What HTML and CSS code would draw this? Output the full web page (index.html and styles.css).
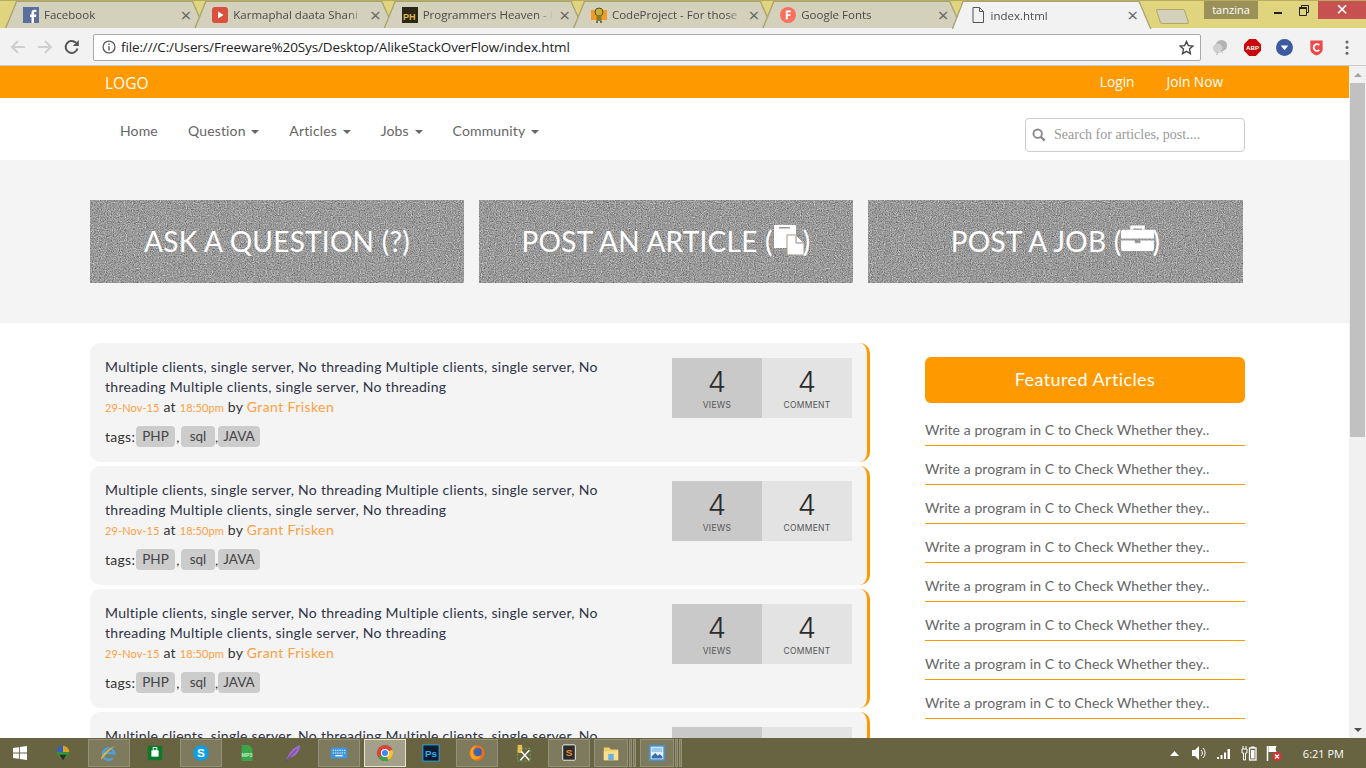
FILE: index.html
```html
<!DOCTYPE html>
<html lang="en">
<head>
<meta charset="utf-8">
<title>index.html</title>
<link rel="stylesheet" href="styles.css">
</head>
<body>
<svg class="defs" width="0" height="0" aria-hidden="true">
  <defs>
    <filter id="grain" x="0" y="0" width="100%" height="100%" color-interpolation-filters="sRGB">
      <feTurbulence type="fractalNoise" baseFrequency="0.85" numOctaves="2" seed="7" stitchTiles="noStitch"/>
      <feColorMatrix type="matrix" values="0.42 0.42 0 0 0.18  0.42 0.42 0 0 0.18  0.42 0.42 0 0 0.18  0 0 0 0 1"/>
    </filter>
  </defs>
</svg>
<div class="screen">
  <div class="tabstrip">
    <div class="tab">
      <svg class="favicon" viewBox="0 0 16 16"><rect width="16" height="16" fill="#5a6f9e"/><path d="M11 16V10h2l.4-2.4H11V6.200c0-.8.3-1.200 1.200-1.200h1.200V2.900c-.5-.1-1.200-.2-1.900-.2-1.900 0-3 1.100-3 3.200v1.700H7V10h1.500v6z" fill="#fff"/></svg>
      <span class="tab-title">Facebook</span><span class="tab-close">×</span>
    </div>
    <div class="tab">
      <svg class="favicon" viewBox="0 0 16 16"><rect width="16" height="16" rx="3" fill="#d9503f"/><path d="M6 4.500v7l5.500-3.500z" fill="#fff"/></svg>
      <span class="tab-title">Karmaphal daata Shani - </span><span class="tab-close">×</span>
    </div>
    <div class="tab">
      <svg class="favicon" viewBox="0 0 16 16"><rect width="16" height="16" fill="#2b2716"/><text x="1" y="12.500" class="ph-text">PH</text></svg>
      <span class="tab-title">Programmers Heaven - F</span><span class="tab-close">×</span>
    </div>
    <div class="tab">
      <svg class="favicon" viewBox="0 0 16 16"><rect x="0" y="3" width="16" height="10" fill="#f09a28"/><circle cx="8" cy="5" r="4" fill="#c8b03c" stroke="#5c4d1c"/><rect x="5.500" y="8" width="5" height="6" fill="#8a7a2a"/><path d="M5 15h2M9 15h2" stroke="#5c4d1c" stroke-width="1.500"/></svg>
      <span class="tab-title">CodeProject - For those </span><span class="tab-close">×</span>
    </div>
    <div class="tab">
      <svg class="favicon" viewBox="0 0 16 16"><circle cx="8" cy="8" r="8" fill="#f9705f"/><path d="M5.800 12.500v-9h5v1.700H7.800v2h2.600v1.700H7.800v3.600z" fill="#fff"/></svg>
      <span class="tab-title">Google Fonts</span><span class="tab-close">×</span>
    </div>
    <div class="tab tab-active">
      <svg class="favicon" viewBox="0 0 16 16"><path d="M3 .500h6.500L13.500 4.500v11H3zM9.500.500v4h4" fill="none" stroke="#555" stroke-width="1"/></svg>
      <span class="tab-title">index.html</span><span class="tab-close">×</span>
    </div>
    <div class="newtab"></div>
    <div class="window-controls">
      <span class="profile">tanzina</span>
      <span class="win-min"></span>
      <svg class="win-restore" viewBox="0 0 10 11"><path d="M2.500 2.500V.5h7v7H7.500M.5 2.500h7v8h-7z" fill="none" stroke="#222" stroke-width="1"/><rect x=".5" y="2.500" width="7" height="1.500" fill="#222"/></svg>
      <span class="win-close">×</span>
    </div>
  </div>

  <div class="toolbar">
    <svg class="tool" viewBox="0 0 16 16"><path d="M15 8H2M8 2 2 8l6 6" fill="none" stroke="#cfcfcf" stroke-width="2"/></svg>
    <svg class="tool" viewBox="0 0 16 16"><path d="M1 8h13M8 2l6 6-6 6" fill="none" stroke="#cfcfcf" stroke-width="2"/></svg>
    <svg class="tool" viewBox="0 0 16 16"><path d="M13.500 9.500A6 6 0 1 1 12 3.800" fill="none" stroke="#555" stroke-width="2"/><path d="M14.800 1v6h-6z" fill="#555"/></svg>
    <div class="address">
      <svg class="info" viewBox="0 0 16 16"><circle cx="8" cy="8" r="6.800" fill="none" stroke="#5a5a5a" stroke-width="1.500"/><rect x="7.200" y="7" width="1.600" height="5" fill="#5a5a5a"/><rect x="7.200" y="4" width="1.600" height="1.700" fill="#5a5a5a"/></svg>
      <span class="url">file:///C:/Users/Freeware%20Sys/Desktop/AlikeStackOverFlow/index.html</span>
      <svg class="star" viewBox="0 0 16 16"><path d="M8 1.500l2 4.500 4.800.5-3.600 3.200 1 4.800L8 12.100l-4.200 2.400 1-4.800L1.200 6.500 6 6z" fill="none" stroke="#444" stroke-width="1.400"/></svg>
    </div>
    <div class="extensions">
      <svg class="ext" viewBox="0 0 18 18"><circle cx="10" cy="7" r="6" fill="#b4b4b4"/><circle cx="6" cy="10" r="5" fill="#d0d0d0"/><path d="M6 14l-1 3M10 12l1 3" stroke="#aaa"/></svg>
      <svg class="ext" viewBox="0 0 18 18"><path d="M5.500 0h7L18 5.500v7L12.500 18h-7L0 12.500v-7z" fill="#c80a0a"/><text x="9" y="11.500" class="abp-text">ABP</text></svg>
      <svg class="ext" viewBox="0 0 18 18"><circle cx="9" cy="9" r="9" fill="#3b5aa0"/><path d="M5 7h8l-4 5z" fill="#fff"/></svg>
      <svg class="ext" viewBox="0 0 18 18"><path d="M2.500 1.500h13V11c0 3-3 5-6.500 6.500C5.500 16 2.500 14 2.500 11z" fill="#f04848"/><path d="M12 6.500A3.500 3.500 0 1 0 12 11.500" fill="none" stroke="#fff" stroke-width="2"/></svg>
      <svg class="ext ext-menu" viewBox="0 0 4 16"><circle cx="2" cy="2" r="1.600" fill="#666"/><circle cx="2" cy="8" r="1.600" fill="#666"/><circle cx="2" cy="14" r="1.600" fill="#666"/></svg>
    </div>
  </div>

  <div class="viewport">
    <div class="page">
      <header class="topbar">
        <a class="logo">LOGO</a>
        <div class="auth"><a>Login</a><a>Join Now</a></div>
      </header>
      <nav class="mainnav">
        <ul class="menu">
          <li>Home</li>
          <li>Question <i class="caret"></i></li>
          <li>Articles <i class="caret"></i></li>
          <li>Jobs <i class="caret"></i></li>
          <li>Community <i class="caret"></i></li>
        </ul>
        <div class="search">
          <svg class="search-icon" viewBox="0 0 16 16"><circle cx="6.500" cy="6.500" r="4.800" fill="none" stroke="#8a8a8a" stroke-width="2.200"/><path d="M10 10l4.500 4.500" stroke="#8a8a8a" stroke-width="2.800"/></svg>
          <span class="placeholder">Search for articles, post....</span>
        </div>
      </nav>
      <section class="hero">
        <a class="banner"><svg class="noise"><rect width="100%" height="100%" filter="url(#grain)"/></svg><span class="banner-label">ASK A QUESTION (?)</span></a>
        <a class="banner"><svg class="noise"><rect width="100%" height="100%" filter="url(#grain)"/></svg><span class="banner-label">POST AN ARTICLE (<svg class="banner-icon" viewBox="0 0 31 30"><path d="M2 0h20a1 1 0 0 1 1 1v22H1V1a1 1 0 0 1 1-1z" fill="#fff"/><rect x="6" y="2" width="11" height="1.500" fill="#999"/><path d="M14 10h9l8 8v12H14z" fill="#fff" stroke="#a89a78"/><path d="M23 11v7h7" fill="none" stroke="#888"/></svg>)</span></a>
        <a class="banner"><svg class="noise"><rect width="100%" height="100%" filter="url(#grain)"/></svg><span class="banner-label">POST A JOB (<svg class="banner-icon banner-icon-job" viewBox="0 0 34 28"><path d="M11 5V2h12v3" fill="none" stroke="#fff" stroke-width="3"/><path d="M2 5h30a2 2 0 0 1 2 2v7H0V7a2 2 0 0 1 2-2zM0 16h14v3h6v-3h14v9a2 2 0 0 1-2 2H2a2 2 0 0 1-2-2z" fill="#fff"/></svg>)</span></a>
      </section>
      <main class="content">
        <div class="posts">
          <article class="post">
            <div class="post-body">
              <p class="post-title">Multiple clients, single server, No threading Multiple clients, single server, No threading Multiple clients, single server, No threading</p>
              <p class="post-meta"><span class="stamp">29-Nov-15</span> at <span class="stamp">18:50pm</span> by <a class="author">Grant Frisken</a></p>
              <p class="post-tags"><span class="tags-label">tags:</span><span class="tag tag-php">PHP</span><span class="sep">,</span><span class="tag tag-sql">sql</span><span class="sep sep-tight">,</span><span class="tag tag-java">JAVA</span></p>
            </div>
            <div class="stats">
              <div class="stat stat-views"><b>4</b><small>VIEWS</small></div>
              <div class="stat stat-comments"><b>4</b><small>COMMENT</small></div>
            </div>
          </article>
          <article class="post">
            <div class="post-body">
              <p class="post-title">Multiple clients, single server, No threading Multiple clients, single server, No threading Multiple clients, single server, No threading</p>
              <p class="post-meta"><span class="stamp">29-Nov-15</span> at <span class="stamp">18:50pm</span> by <a class="author">Grant Frisken</a></p>
              <p class="post-tags"><span class="tags-label">tags:</span><span class="tag tag-php">PHP</span><span class="sep">,</span><span class="tag tag-sql">sql</span><span class="sep sep-tight">,</span><span class="tag tag-java">JAVA</span></p>
            </div>
            <div class="stats">
              <div class="stat stat-views"><b>4</b><small>VIEWS</small></div>
              <div class="stat stat-comments"><b>4</b><small>COMMENT</small></div>
            </div>
          </article>
          <article class="post">
            <div class="post-body">
              <p class="post-title">Multiple clients, single server, No threading Multiple clients, single server, No threading Multiple clients, single server, No threading</p>
              <p class="post-meta"><span class="stamp">29-Nov-15</span> at <span class="stamp">18:50pm</span> by <a class="author">Grant Frisken</a></p>
              <p class="post-tags"><span class="tags-label">tags:</span><span class="tag tag-php">PHP</span><span class="sep">,</span><span class="tag tag-sql">sql</span><span class="sep sep-tight">,</span><span class="tag tag-java">JAVA</span></p>
            </div>
            <div class="stats">
              <div class="stat stat-views"><b>4</b><small>VIEWS</small></div>
              <div class="stat stat-comments"><b>4</b><small>COMMENT</small></div>
            </div>
          </article>
          <article class="post">
            <div class="post-body">
              <p class="post-title">Multiple clients, single server, No threading Multiple clients, single server, No threading Multiple clients, single server, No threading</p>
              <p class="post-meta"><span class="stamp">29-Nov-15</span> at <span class="stamp">18:50pm</span> by <a class="author">Grant Frisken</a></p>
              <p class="post-tags"><span class="tags-label">tags:</span><span class="tag tag-php">PHP</span><span class="sep">,</span><span class="tag tag-sql">sql</span><span class="sep sep-tight">,</span><span class="tag tag-java">JAVA</span></p>
            </div>
            <div class="stats">
              <div class="stat stat-views"><b>4</b><small>VIEWS</small></div>
              <div class="stat stat-comments"><b>4</b><small>COMMENT</small></div>
            </div>
          </article>
        </div>
        <aside class="sidebar">
          <h2 class="side-head">Featured Articles</h2>
          <ul class="side-list">
            <li>Write a program in C to Check Whether they..</li>
            <li>Write a program in C to Check Whether they..</li>
            <li>Write a program in C to Check Whether they..</li>
            <li>Write a program in C to Check Whether they..</li>
            <li>Write a program in C to Check Whether they..</li>
            <li>Write a program in C to Check Whether they..</li>
            <li>Write a program in C to Check Whether they..</li>
            <li>Write a program in C to Check Whether they..</li>
          </ul>
        </aside>
      </main>
    </div>
    <div class="scrollbar">
      <i class="arrow-up"></i>
      <div class="track"><div class="thumb"></div></div>
      <i class="arrow-down"></i>
    </div>
  </div>

  <footer class="taskbar">
    <svg class="start" viewBox="0 0 16 16"><path d="M0 2.300 6.800 1.300V7.500H0zM7.800 1.200 16 0v7.500H7.800zM0 8.500h6.800v6.200L0 13.700zM7.800 8.500H16V16l-8.200-1.200z" fill="#fff"/></svg>
    <div class="task"><svg viewBox="0 0 20 20"><circle cx="10" cy="9" r="7" fill="#3a8f3a"/><path d="M10 2a7 7 0 0 1 7 7h-7z" fill="#e0a020"/><path d="M3 9a7 7 0 0 1 7-7v7z" fill="#3060c0"/><path d="M6 12h8l-4 6z" fill="#2c2c2c"/></svg></div>
    <div class="task task-on"><svg viewBox="0 0 20 20"><path d="M16 12a6.500 6.500 0 1 0-1.500 3.500M4 10h12" fill="none" stroke="#4aa3e0" stroke-width="2.600"/><path d="M1 18c0-5 8-14 17-16-3 0-14 12-17 16z" fill="#e9b52a"/></svg></div>
    <div class="task"><svg viewBox="0 0 20 20"><rect x="2" y="2" width="16" height="16" fill="#0a7a28"/><rect x="6" y="7" width="8" height="7" fill="#fff"/><rect x="8" y="4" width="4" height="3" fill="none" stroke="#fff"/></svg></div>
    <div class="task task-on"><svg viewBox="0 0 20 20"><circle cx="10" cy="10" r="8.500" fill="#0aa0e8"/><text x="10" y="14.500" class="skype-text">S</text></svg></div>
    <div class="task"><svg viewBox="0 0 20 20"><path d="M4 1h8l4 4v14H4z" fill="#3aa648"/><text x="10" y="14" class="mp3-text">MP3</text></svg></div>
    <div class="task"><svg viewBox="0 0 20 20"><path d="M2 19C5 10 10 3 18 1c0 7-5 13-11 14z" fill="#9a6cc8"/><path d="M2 19 14 6" stroke="#5b3a84"/></svg></div>
    <div class="task task-on"><svg viewBox="0 0 20 20"><rect x="1" y="4" width="18" height="12" rx="1" fill="#3e96e0"/><path d="M3 7h14M3 10h14" stroke="#fff" stroke-dasharray="1.500 1"/><path d="M6 13h8" stroke="#fff" stroke-width="1.500"/></svg></div>
    <div class="task task-active"><svg viewBox="0 0 20 20"><circle cx="10" cy="10" r="9" fill="#d8443a"/><path d="M10 10 2.500 15A9 9 0 0 0 14 18z" fill="#3ca24a"/><path d="M10 10l4 8a9 9 0 0 0 4-12z" fill="#f2c42e"/><circle cx="10" cy="10" r="4.500" fill="#fff"/><circle cx="10" cy="10" r="3.400" fill="#4285f4"/></svg></div>
    <div class="task"><svg viewBox="0 0 20 20"><rect x="1" y="1" width="18" height="18" fill="#0d1c33" stroke="#2fb0ea"/><text x="10" y="14" class="ps-text">Ps</text></svg></div>
    <div class="task task-on"><svg viewBox="0 0 20 20"><circle cx="10" cy="10" r="8.500" fill="#e8701f"/><circle cx="11" cy="9" r="4.500" fill="#3a64b0"/><path d="M2.500 10C3 5 6 2 10 1.500c-2 1-3 2.500-3 4C5 7 5 9 6 11c1 3 5 4 8 2-1 4-7 5.500-10 2.500-1-1-1.500-3-1.500-5.500z" fill="#f4a321"/></svg></div>
    <div class="task"><svg viewBox="0 0 20 20"><rect x="4" y="5" width="14" height="14" fill="none" stroke="#5fc24a" stroke-dasharray="2 2"/><path d="M4 1h5v9H4z" fill="#e6bf52"/><path d="M7 18 17 7M8 8l9 10" stroke="#fff" stroke-width="1.500"/></svg></div>
    <div class="task task-on"><svg viewBox="0 0 20 20"><rect x="3" y="1" width="14" height="17" rx="1" fill="#2b2b2b" stroke="#fff"/><text x="10" y="13" class="subl-text">S</text></svg></div>
    <div class="task task-on task-stack"><svg viewBox="0 0 20 20"><path d="M2 4h6l2 2h8v12H2z" fill="#f0cf6a"/><path d="M2 8h16v10H2z" fill="#f8e08c"/><rect x="7" y="11" width="6" height="7" fill="#6ab0e0"/></svg></div>
    <i class="stack-edge"></i><i class="stack-edge"></i>
    <div class="task task-on task-stack task-last"><svg viewBox="0 0 20 20"><rect x="2" y="2" width="16" height="16" fill="#e8f2fa" stroke="#4a90d0" stroke-width="2"/><path d="M4 14l4-4 3 3 2-2 3 3v2H4z" fill="#3a6ea8"/><rect x="4" y="4" width="12" height="5" fill="#9ccaea"/></svg></div>
    <i class="stack-edge"></i><i class="stack-edge"></i>
    <div class="tray">
      <svg class="tray-up" viewBox="0 0 9 5"><path d="M0 5 4.500 0 9 5z" fill="#fff"/></svg>
      <svg class="tray-ico" viewBox="0 0 16 16"><path d="M1 5h3l4-4v14l-4-4H1z" fill="#fff"/><path d="M10 5a4 4 0 0 1 0 6M12 3a7 7 0 0 1 0 10" fill="none" stroke="#fff"/></svg>
      <svg class="tray-ico" viewBox="0 0 16 16"><path d="M1 12h2v2H1zM4.500 10h2v4h-2zM8 7.500h2V14H8zM11.500 4h2.500v10h-2.500z" fill="#fff"/></svg>
      <svg class="tray-ico" viewBox="0 0 16 16"><path d="M2 1v3M5 1v3M1 4h5v4H4.500v7h-2V8H1z" fill="none" stroke="#fff"/><rect x="8.500" y="3" width="6.500" height="12" fill="none" stroke="#fff" stroke-width="1.300"/><rect x="10" y="1.500" width="3.500" height="1.500" fill="#fff"/><rect x="10" y="5" width="3.500" height="8.500" fill="#fff"/></svg>
      <svg class="tray-ico" viewBox="0 0 16 16"><path d="M1.500 1v15" stroke="#fff" stroke-width="1.500"/><path d="M2.500 1h8l-1 3 1 3h-8z" fill="#fff"/><circle cx="11" cy="11.500" r="4.500" fill="#e03030"/><path d="M9 9.500l4 4M13 9.500l-4 4" stroke="#fff" stroke-width="1.300"/></svg>
      <span class="clock">6:21 PM</span>
    </div>
  </footer>
</div>
</body>
</html>
```

FILE: styles.css
```css
* { box-sizing: border-box; }
html, body { margin: 0; padding: 0; height: 100%; overflow: hidden; }
body { font-family: "Lato", "Open Sans", sans-serif; background: #fff; }
p, h2, ul { margin: 0; padding: 0; }
ul { list-style: none; }
.defs { display: block; height: 0; }
.screen { display: flex; flex-direction: column; height: 768px; overflow: hidden; }

/* browser tab strip */
.tabstrip { height: 28px; flex: none; display: flex; align-items: flex-end; padding-left: 5px; background: #e0d47f; border-top: 1px solid #b8ac62; position: relative; }
.tab { position: relative; flex: none; width: 200px; height: 27px; margin-right: -10.700px; display: flex; align-items: center; padding: 0 13px 0 18px; font: 11.500px "Open Sans", sans-serif; color: #4a4a4a; background: #a9a46f; clip-path: polygon(0 100%, 11px 0, 188px 0, 200px 100%); }
.tab::before { content: ""; position: absolute; inset: 0; background: #d3d0bb; clip-path: polygon(1.500px 100%, 12px 1px, 187px 1px, 198.500px 100%); }
.tab > * { position: relative; }
.tab-active { height: 28px; margin-bottom: -1px; z-index: 1; }
.tab-active::before { background: #f2f2f2; }
.favicon { width: 16px; height: 16px; flex: none; margin-right: 5px; }
.tab-title { flex: 1; min-width: 0; white-space: nowrap; overflow: hidden; margin-right: 6px; -webkit-mask-image: linear-gradient(to right, #000 88%, transparent); mask-image: linear-gradient(to right, #000 88%, transparent); }
.tab-close { flex: none; font-size: 19px; line-height: 16px; width: 12px; text-align: center; color: #666; }
.ph-text { font: bold 9px "Liberation Sans", sans-serif; fill: #e0b84a; }
.newtab { flex: none; width: 29px; height: 15px; margin: 0 0 4px 17px; background: #d3d0bb; border: 1px solid #b0a868; transform: skewX(18deg); border-radius: 2px; }
.window-controls { flex: none; margin-left: auto; align-self: flex-start; display: flex; align-items: flex-start; height: 19px; }
.profile { width: 54px; height: 18px; background: #9a9159; color: #fff; font: 11px/17px "Open Sans", sans-serif; text-align: center; }
.win-min { width: 8px; height: 2px; background: #222; margin: 11px 0 0 16px; }
.win-restore { width: 10px; height: 11px; margin: 4px 0 0 17px; }
.win-close { width: 48px; height: 18px; margin-left: 9px; background: #c75050; color: #fff; font: 20px/17px "Liberation Sans", sans-serif; text-align: center; }

/* browser toolbar */
.toolbar { height: 38px; flex: none; display: flex; align-items: center; padding: 1px 0 0 10px; gap: 11px; background: #f2f2f2; border-bottom: 1px solid #c9c9c9; }
.tool { width: 16px; height: 16px; flex: none; }
.toolbar .tool:nth-child(3) { margin-right: 2px; }
.address { width: 1108px; height: 27px; flex: none; display: flex; align-items: center; padding: 0 6px 0 8px; background: #fff; border: 1px solid #a9a9a9; border-radius: 2px; }
.info { width: 14px; height: 14px; flex: none; margin-right: 5px; }
.url { flex: 1; font: 13.500px "Open Sans", sans-serif; letter-spacing: -0.130px; color: #222; }
.star { width: 15px; height: 15px; flex: none; }
.extensions { flex: 1; display: flex; align-items: center; gap: 15px; padding-left: 11px; margin-left: -11px; }
.ext { width: 17px; height: 17px; flex: none; }
.ext-menu { width: 4px; height: 15px; margin-left: 5px; }
.abp-text { font: bold 6.500px "Liberation Sans", sans-serif; fill: #fff; text-anchor: middle; }

/* page */
.viewport { flex: 1; min-height: 0; display: flex; }
.page { flex: 1; min-width: 0; overflow: hidden; }
.topbar { height: 32px; display: flex; justify-content: space-between; align-items: center; padding: 0 126px 0 105px; background: #ff9900; color: #fff; font-family: "Open Sans", sans-serif; }
.logo { font-size: 15.500px; position: relative; top: 1px; }
.auth { display: flex; gap: 32px; font-size: 13.700px; margin-top: -2px; }
.mainnav { height: 62px; display: flex; justify-content: space-between; padding: 20px 104px 0 120px; background: #fff; }
.menu { display: flex; gap: 30px; height: 28px; margin-top: -2px; align-items: center; font-size: 14px; letter-spacing: .15px; color: #666; }
.caret { display: inline-block; width: 0; height: 0; margin-left: 2px; vertical-align: middle; border-top: 4px solid #666; border-left: 4px solid transparent; border-right: 4px solid transparent; }
.search { width: 220px; height: 34px; display: flex; align-items: center; gap: 8px; padding-left: 6px; background: #fff; border: 1px solid #ccc; border-radius: 4px; }
.search-icon { width: 14px; height: 14px; flex: none; }
.placeholder { font: 14px "Liberation Serif", serif; color: #999; }
.hero { height: 163px; display: flex; gap: 15px; padding: 40px 106px 40px 90px; background: #f4f4f4; }
.banner { flex: 0 0 374px; position: relative; display: flex; align-items: center; justify-content: center; overflow: hidden; background: #979797; color: #fff; font-size: 28px; }
.banner:last-child { flex: 1; }
.noise { position: absolute; inset: 0; width: 100%; height: 100%; }
.banner-label { position: relative; display: flex; align-items: center; white-space: nowrap; letter-spacing: .25px; padding-bottom: 1px; }
.banner-icon { width: 31px; height: 30px; margin: -2px -1px 0 0; flex: none; }
.banner-icon-job { width: 33px; height: 27px; margin: -5px -2px 0 0; }
.content { display: flex; padding: 20px 104px 0 90px; }
.posts { width: 780px; flex: none; display: flex; flex-direction: column; gap: 4px; }
.post { height: 119px; flex: none; display: flex; justify-content: space-between; padding: 14px 15px 0; background: #f4f4f4; border-right: 3px solid #ff9900; border-radius: 10px; font-size: 14px; letter-spacing: .28px; color: #333; }
.post-body { width: 505px; }
.post-title { line-height: 20px; color: #2f3346; }
.post-meta { height: 20px; line-height: 20px; overflow: hidden; }
.stamp { color: #ff9f3f; font-size: 11px; letter-spacing: .1px; }
.author { color: #ff9f3f; letter-spacing: .4px; }
.post-tags { display: flex; align-items: center; margin-top: 9px; height: 21px; }
.tags-label { width: 31px; flex: none; }
.tag { height: 21px; line-height: 21px; text-align: center; background: #cccccc; border-radius: 4px; color: #444; letter-spacing: 0; flex: none; font-size: 13.500px; }
.tag-php { width: 39px; }
.tag-sql { width: 34px; }
.tag-java { width: 42px; }
.sep { width: 6px; text-align: center; }
.sep-tight { width: 3px; }
.stats { display: flex; width: 180px; height: 60px; margin-top: 1px; flex: none; font-family: "Inter", sans-serif; color: #2b2b2b; }
.stat { flex: 1; display: flex; flex-direction: column; align-items: center; }
.stat b { font-weight: 300; font-size: 29px; line-height: 32px; margin-top: 8px; }
.stat small { font-size: 8.500px; line-height: 14px; letter-spacing: .3px; color: #555; margin-top: 0; }
.stat-views { background: #c9c9c9; }
.stat-comments { background: #e3e3e3; }
.sidebar { width: 320px; flex: none; margin: 14px 0 0 55px; }
.side-head { height: 46px; background: #ff9900; border-radius: 6px; color: #fff; font-weight: 400; font-size: 18px; line-height: 45px; text-align: center; letter-spacing: .4px; }
.side-list { margin-top: 4px; }
.side-list li { height: 39px; padding-top: 13px; line-height: 20px; font-size: 14px; letter-spacing: .07px; color: #666; border-bottom: 1px solid #ff9900; }

/* scrollbar */
.scrollbar { width: 17px; flex: none; display: flex; flex-direction: column; align-items: center; background: #f1f1f1; }
.arrow-up, .arrow-down { flex: none; width: 0; height: 0; margin: 7px 0 5px; border-left: 4px solid transparent; border-right: 4px solid transparent; }
.arrow-up { border-bottom: 4px solid #a3a3a3; }
.arrow-down { border-top: 4px solid #505050; margin: 5px 0 6px; }
.track { flex: 1; width: 100%; }
.thumb { height: 354px; margin-top: 1px; background: #c1c1c1; width: 15px; margin-left: 1px; }

/* windows taskbar */
.taskbar { height: 30px; flex: none; display: flex; align-items: center; background: #686341; }
.start { width: 14px; height: 14px; flex: none; margin: 0 15px 0 13px; }
.task { width: 42px; height: 28px; flex: none; margin-right: 4px; display: flex; align-items: center; justify-content: center; }
.task svg { width: 18px; height: 18px; }
.task-on { background: #7e7a5e; border: 1px solid #94907a; }
.task-active { background: #a3a18a; border: 1px solid #e4e3d9; }
.task-stack { width: 34px; margin-right: 0; }
.task-last { margin-left: 4px; width: 34px; }
.stack-edge { width: 3px; height: 28px; flex: none; background: #7e7a5e; border: 1px solid #94907a; margin-left: 1px; }
.skype-text { font: bold 13px "Liberation Sans", sans-serif; fill: #fff; text-anchor: middle; }
.mp3-text { font: bold 6px "Liberation Sans", sans-serif; fill: #bdf0c0; text-anchor: middle; }
.ps-text { font: bold 11px "Liberation Sans", sans-serif; fill: #2fb0ea; text-anchor: middle; }
.subl-text { font: bold 11px "Liberation Sans", sans-serif; fill: #f09030; text-anchor: middle; }
.tray { flex: 1; display: flex; align-items: center; justify-content: flex-end; gap: 9px; padding-right: 22px; color: #fff; }
.tray-up { width: 9px; height: 5px; margin-right: 3px; }
.tray-ico { width: 16px; height: 16px; }
.clock { font: 11px "Open Sans", sans-serif; margin-left: 12px; }
```
